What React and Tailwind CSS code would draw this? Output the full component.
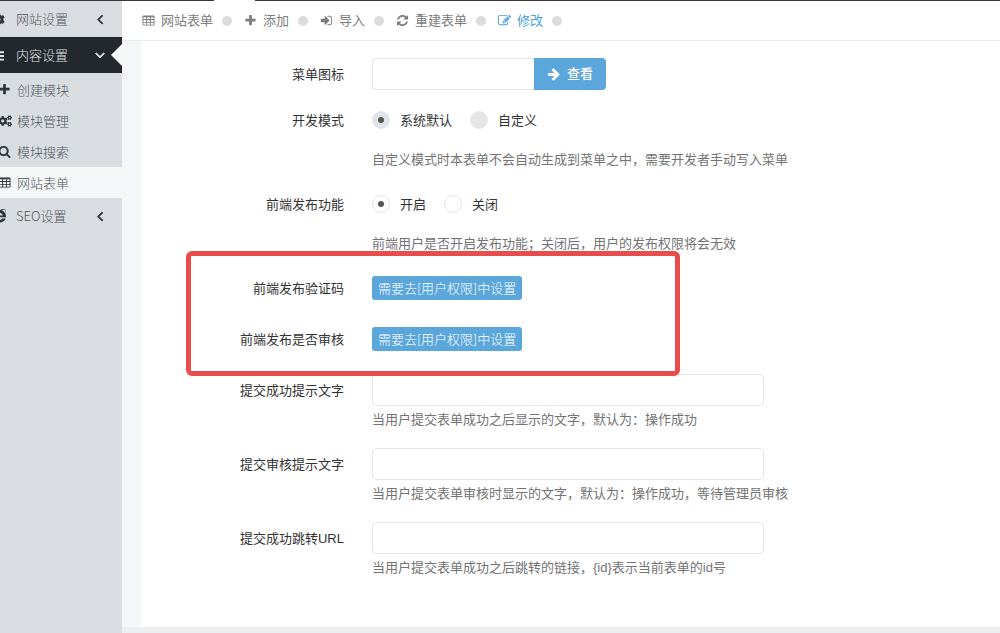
import { useState } from 'react';
import { FaCog, FaCogs, FaInternetExplorer } from 'react-icons/fa';

const PATHS = {
  plus: 'M1600 736v192q0 40-28 68t-68 28h-416v416q0 40-28 68t-68 28h-192q-40 0-68-28t-28-68v-416h-416q-40 0-68-28t-28-68v-192q0-40 28-68t68-28h416v-416q0-40 28-68t68-28h192q40 0 68 28t28 68v416h416q40 0 68 28t28 68z',
  search: 'M1216 832q0-185-131.5-316.5t-316.5-131.5-316.5 131.5-131.5 316.5 131.5 316.5 316.5 131.5 316.5-131.5 131.5-316.5zm512 832q0 52-38 90t-90 38q-54 0-90-38l-343-342q-179 124-399 124-143 0-273.5-55.5t-225-150-150-225-55.5-273.5 55.5-273.5 150-225 225-150 273.5-55.5 273.5 55.5 225 150 150 225 55.5 273.5q0 220-124 399l343 343q37 37 37 90z',
  table: 'M224 192h1344q66 0 113 47t47 113v1088q0 66-47 113t-113 47h-1344q-66 0-113-47t-47-113v-1088q0-66 47-113t113-47zM192 480v192q0 32 32 32h320q32 0 32-32v-192q0-32-32-32h-320q-32 0-32 32zM704 480v192q0 32 32 32h320q32 0 32-32v-192q0-32-32-32h-320q-32 0-32 32zM1216 480v192q0 32 32 32h320q32 0 32-32v-192q0-32-32-32h-320q-32 0-32 32zM192 864v192q0 32 32 32h320q32 0 32-32v-192q0-32-32-32h-320q-32 0-32 32zM704 864v192q0 32 32 32h320q32 0 32-32v-192q0-32-32-32h-320q-32 0-32 32zM1216 864v192q0 32 32 32h320q32 0 32-32v-192q0-32-32-32h-320q-32 0-32 32zM192 1248v192q0 32 32 32h320q32 0 32-32v-192q0-32-32-32h-320q-32 0-32 32zM704 1248v192q0 32 32 32h320q32 0 32-32v-192q0-32-32-32h-320q-32 0-32 32zM1216 1248v192q0 32 32 32h320q32 0 32-32v-192q0-32-32-32h-320q-32 0-32 32z',
  bars: 'M192 320h1408q64 0 64 64v128q0 64-64 64h-1408q-64 0-64-64v-128q0-64 64-64zM192 832h1408q64 0 64 64v128q0 64-64 64h-1408q-64 0-64-64v-128q0-64 64-64zM192 1344h1408q64 0 64 64v128q0 64-64 64h-1408q-64 0-64-64v-128q0-64 64-64z',
  signIn: 'M1312 896q0 26-19 45l-544 544q-19 19-45 19t-45-19-19-45v-288h-448q-26 0-45-19t-19-45v-384q0-26 19-45t45-19h448v-288q0-26 19-45t45-19 45 19l544 544q19 19 19 45zm352-352v704q0 119-84.5 203.5t-203.5 84.5h-320q-13 0-22.5-9.5t-9.5-22.5q0-4-1-20t-.5-26.5 3-23.5 10-19.5 20.5-6.5h320q66 0 113-47t47-113v-704q0-66-47-113t-113-47h-312l-11.5-1-11.5-3-8-5.5-7-9-2-13.5q0-4-1-20t-.5-26.5 3-23.5 10-19.5 20.5-6.5h320q119 0 203.5 84.5t84.5 203.5z',
  refresh: 'M1639 1056q0 5-1 7-64 268-268 434.5t-478 166.5q-146 0-282.5-55t-243.5-157l-129 129q-19 19-45 19t-45-19-19-45v-448q0-26 19-45t45-19h448q26 0 45 19t19 45-19 45l-137 137q71 66 161 102t187 36q134 0 250-65t186-179q11-17 53-117 8-23 30-23h192q13 0 22.5 9.5t9.5 22.5zm25-800v448q0 26-19 45t-45 19h-448q-26 0-45-19t-19-45 19-45l138-138q-148-137-349-137-134 0-250 65t-186 179q-11 17-53 117-8 23-30 23h-199q-13 0-22.5-9.5t-9.5-22.5v-7q65-268 270-434.5t480-166.5q146 0 284 55.5t245 156.5l130-129q19-19 45-19t45 19 19 45z',
  edit: 'M888 1184l116-116-152-152-116 116v56h96v96h56zm440-720q-16-16-33 1l-350 350q-17 17-1 33t33-1l350-350q17-17 1-33zm80 594v190q0 119-84.5 203.5t-203.5 84.5h-832q-119 0-203.5-84.5t-84.5-203.5v-832q0-119 84.5-203.5t203.5-84.5h832q63 0 117 25 15 7 18 23 3 17-9 29l-49 49q-14 14-32 8-23-6-45-6h-832q-66 0-113 47t-47 113v832q0 66 47 113t113 47h832q66 0 113-47t47-113v-126q0-13 9-22l64-64q15-15 35-7t20 29zm-96-738l288 288-672 672h-288v-288zm444 132l-92 92-288-288 92-92q28-28 68-28t68 28l152 152q28 28 28 68t-28 68z',
  arrowRight: 'M1600 960q0 54-37 91l-651 651q-39 37-91 37-51 0-90-37l-75-75q-38-38-38-91t38-91l293-293h-704q-52 0-84.5-37.5t-32.5-90.5v-128q0-53 32.5-90.5t84.5-37.5h704l-293-294q-38-36-38-90t38-90l75-75q38-38 90-38 53 0 91 38l651 651q37 35 37 90z',
  angleLeft: 'M1203 544q0 13-10 23l-393 393 393 393q10 10 10 23t-10 23l-50 50q-10 10-23 10t-23-10l-466-466q-10-10-10-23t10-23l466-466q10-10 23-10t23 10l50 50q10 10 10 23z',
  angleDown: 'M1395 736q0 13-10 23l-466 466q-10 10-23 10t-23-10l-466-466q-10-10-10-23t10-23l50-50q10-10 23-10t23 10l393 393 393-393q10-10 23-10t23 10l50 50q10 10 10 23z',
};

function Icon({ name, className = 'size-[13px]' }) {
  return (
    <svg viewBox="0 0 1792 1792" fill="currentColor" fillRule="evenodd" aria-hidden="true" className={`shrink-0 ${className}`}>
      <path d={PATHS[name]} />
    </svg>
  );
}

const TOOLBAR = [
  { icon: 'table', text: '网站表单' },
  { icon: 'plus', text: '添加' },
  { icon: 'signIn', text: '导入' },
  { icon: 'refresh', text: '重建表单' },
  { icon: 'edit', text: '修改', active: true },
];

const SUB_MENU = [
  { icon: <Icon name="plus" />, text: '创建模块' },
  { icon: <FaCogs className="size-[14px]" />, text: '模块管理' },
  { icon: <Icon name="search" />, text: '模块搜索' },
  { icon: <Icon name="table" />, text: '网站表单', active: true },
];

function MenuGroup({ icon, text, open }) {
  return (
    <a
      href="#"
      className={`relative flex h-9 items-center pr-[14px] ${open ? 'bg-[#23282e] text-[#e4e6e8]' : 'text-[#51555a]'}`}
    >
      <span className={`-ml-2 flex w-6 shrink-0 ${open ? '' : 'text-[#2f353b]'}`}>{icon}</span>
      <span className="flex-1">{text}</span>
      <Icon
        name={open ? 'angleDown' : 'angleLeft'}
        className={`size-4 stroke-current stroke-[90] ${open ? '' : 'text-[#2f353b]'}`}
      />
      {open && (
        <span className="absolute top-1/2 right-0 -translate-y-1/2 border-y-[11px] border-r-[11px] border-y-transparent border-r-[#f4f6f8]" />
      )}
    </a>
  );
}

function Sidebar() {
  return (
    <nav className="w-[122px] shrink-0 overflow-hidden bg-[#d9dde2] font-['Noto_Sans_CJK_SC',sans-serif] font-light">
      <MenuGroup icon={<FaCog className="size-[13px]" />} text="网站设置" />
      <MenuGroup icon={<Icon name="bars" />} text="内容设置" open />
      <ul className="pt-px">
        {SUB_MENU.map((item) => (
          <li key={item.text}>
            <a
              href="#"
              className={`flex h-[31px] items-center text-[#51555a] ${item.active ? 'bg-[#f4f6f8]' : ''}`}
            >
              <span className="-ml-[2px] flex w-[19px] shrink-0 text-[#2f353b]">{item.icon}</span>
              {item.text}
            </a>
          </li>
        ))}
      </ul>
      <MenuGroup icon={<FaInternetExplorer className="size-[14px]" />} text="SEO设置" />
    </nav>
  );
}

function Row({ label, htmlFor, help, helpClass = 'mt-1', children }) {
  return (
    <div className="flex gap-7">
      <label htmlFor={htmlFor} className="h-8 w-[203px] shrink-0 text-right leading-[34px] text-[#333]">
        {label}
      </label>
      <div className="min-w-0 flex-1">
        <div className="flex h-8 items-center">{children}</div>
        {help && <p className={`-mb-px leading-5 text-[#737373] ${helpClass}`}>{help}</p>}
      </div>
    </div>
  );
}

function RadioGroup({ name, options, inputClass }) {
  const [value, setValue] = useState(options[0]);

  return (
    <div className="flex gap-[18px]" role="radiogroup">
      {options.map((option) => (
        <label key={option} className="flex items-center gap-[10px] text-[#333]">
          <input
            type="radio"
            name={name}
            checked={value === option}
            onChange={() => setValue(option)}
            className={`flex size-[18px] appearance-none items-center justify-center rounded-full before:size-[6px] before:rounded-full checked:before:bg-[#555] ${inputClass}`}
          />
          <span className="pt-[2px]">{option}</span>
        </label>
      ))}
    </div>
  );
}

function TextRow({ id, label, help }) {
  return (
    <Row label={label} htmlFor={id} help={help}>
      <input
        id={id}
        type="text"
        className="h-8 w-full max-w-[392px] rounded-[4px] border border-[#e5e5ee] px-3 outline-none focus:border-[#93a1bb]"
      />
    </Row>
  );
}

function Badge() {
  return (
    <span className="rounded-[3px] bg-[#5ba7db] px-[6px] font-['Noto_Sans_CJK_SC',sans-serif] font-light leading-6 text-white">
      需要去[用户权限]中设置
    </span>
  );
}

export default function App() {
  return (
    <div className="flex min-h-screen flex-col bg-white font-['Liberation_Sans','Noto_Sans_CJK_SC',sans-serif] text-[13px]">
      <div className="flex h-px bg-[#3b383d]">
        <span className="ml-[214px] w-[41px] bg-white" />
      </div>

      <div className="flex flex-1">
        <Sidebar />

        <div className="flex min-w-0 flex-1 flex-col">
          <header className="flex h-10 items-center gap-3 border-b border-[#e8eaec] pl-5">
            {TOOLBAR.map((item) => (
              <div key={item.text} className="flex items-center gap-[9px]">
                <a
                  href="#"
                  className={`flex items-center gap-[6px] ${item.active ? 'text-[#4a9fe0]' : 'text-[#7d7d7d]'}`}
                >
                  <Icon name={item.icon} />
                  {item.text}
                </a>
                <span className="size-[10px] rounded-full bg-[#dcdcdc]" />
              </div>
            ))}
          </header>

          <main className="flex flex-1 bg-[#f4f6f8] pl-[19px]">
            <form className="flex-1 bg-white pt-[17px] pb-12">
              <Row label="菜单图标" htmlFor="menu-icon">
                <input
                  id="menu-icon"
                  type="text"
                  className="h-8 w-[162px] rounded-l-[4px] border border-r-0 border-[#e5e5ee] px-3 outline-none"
                />
                <button
                  type="button"
                  className="flex h-8 items-center gap-[6px] rounded-r-[4px] bg-[#5ba7db] px-[13px] font-medium text-white"
                >
                  <Icon name="arrowRight" className="size-[14px]" />
                  查看
                </button>
              </Row>

              <div className="mt-[14px] flex flex-col gap-[19px]">
                <Row
                  label="开发模式"
                  help="自定义模式时本表单不会自动生成到菜单之中，需要开发者手动写入菜单"
                  helpClass="mt-[14px]"
                >
                  <RadioGroup
                    name="mode"
                    options={['系统默认', '自定义']}
                    inputClass="bg-[#e5e5e5] checked:bg-[#e1e4eb]"
                  />
                </Row>
                <Row
                  label="前端发布功能"
                  help="前端用户是否开启发布功能；关闭后，用户的发布权限将会无效"
                  helpClass="mt-[14px]"
                >
                  <RadioGroup name="post" options={['开启', '关闭']} inputClass="border border-[#e4e4ee]" />
                </Row>

                <div className="relative flex flex-col gap-[19px]">
                  <Row label="前端发布验证码">
                    <Badge />
                  </Row>
                  <Row label="前端发布是否审核">
                    <Badge />
                  </Row>
                  {/* highlight frame */}
                  <div className="pointer-events-none absolute -top-[21px] -bottom-[21px] left-[45px] w-[494px] rounded-[6px] border-[5px] border-[#e84c4c]" />
                </div>

                <TextRow id="ok-text" label="提交成功提示文字" help="当用户提交表单成功之后显示的文字，默认为：操作成功" />
                <TextRow
                  id="verify-text"
                  label="提交审核提示文字"
                  help="当用户提交表单审核时显示的文字，默认为：操作成功，等待管理员审核"
                />
                <TextRow id="ok-url" label="提交成功跳转URL" help="当用户提交表单成功之后跳转的链接，{id}表示当前表单的id号" />
              </div>
            </form>
          </main>
          <footer className="h-[6px] bg-[#ebeff0]" />
        </div>
      </div>
    </div>
  );
}
